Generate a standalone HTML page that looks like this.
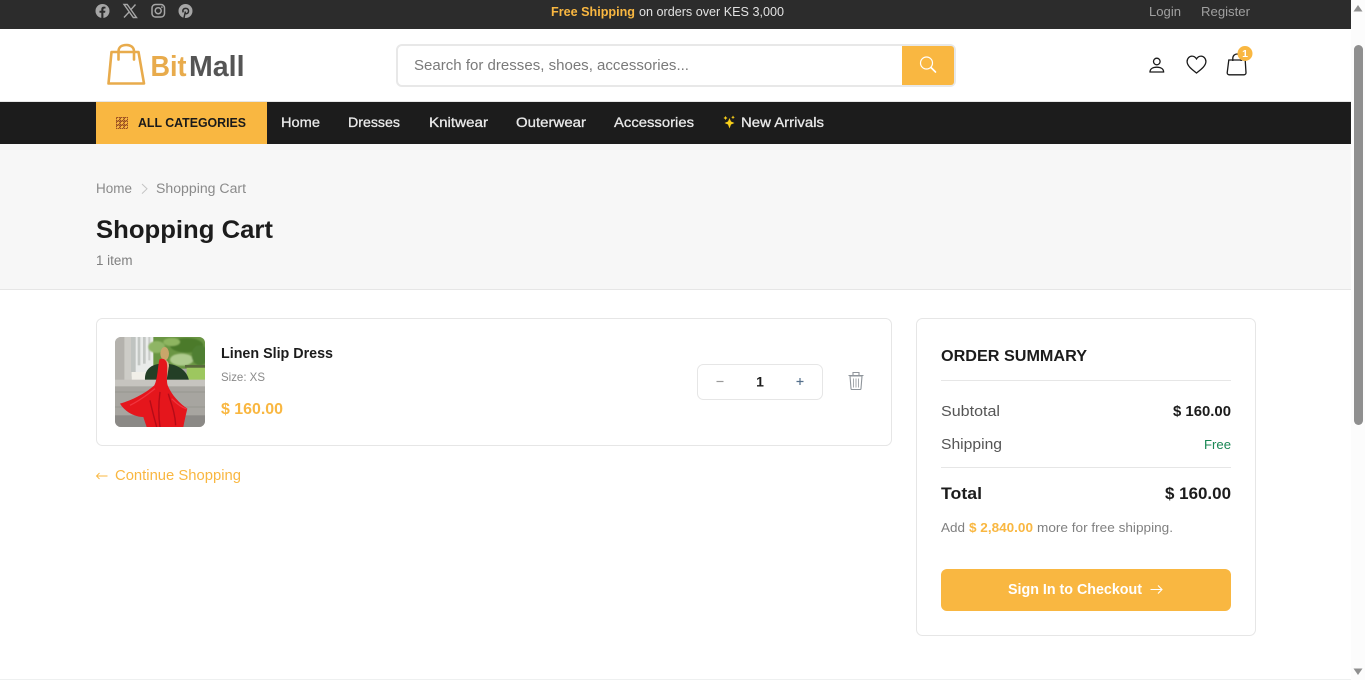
<!DOCTYPE html>
<html lang="en">
<head>
<meta charset="utf-8">
<title>Shopping Cart - BitMall</title>
<style>
html,body{margin:0;padding:0;width:1365px;height:680px;overflow:hidden;background:#fff}
svg{position:absolute;left:0;top:0;display:block}
text{font-family:"Liberation Sans",sans-serif;white-space:pre}
.b{font-weight:700}
</style>
</head>
<body>
<svg width="1365" height="680" viewBox="0 0 1365 680" xmlns="http://www.w3.org/2000/svg">
<defs>
<clipPath id="imgclip"><rect x="0" y="0" width="90" height="90" rx="6"/></clipPath>
<filter id="soft" x="-5%" y="-5%" width="110%" height="110%"><feGaussianBlur stdDeviation="2"/></filter>
<filter id="soft2" x="-5%" y="-5%" width="110%" height="110%"><feGaussianBlur stdDeviation="0.7"/></filter>
</defs>

<!-- backgrounds -->
<rect width="1365" height="680" fill="#fff"/>
<rect width="1351" height="29" fill="#2c2c2c"/>
<rect y="101" width="1351" height="1" fill="#e6e6e6"/>
<rect y="102" width="1351" height="42" fill="#1c1c1c"/>
<rect x="96" y="102" width="171" height="42" fill="#f9b741"/>
<rect y="144" width="1351" height="145" fill="#f7f7f7"/>
<rect y="289" width="1351" height="1" fill="#e6e6e6"/>
<rect y="679" width="1351" height="1" fill="#eef0f0"/>

<!-- scrollbar -->
<rect x="1351" width="14" height="680" fill="#fcfcfc"/>
<path d="M1358 5l4.500 6.500h-9z" fill="#8f8f8f"/>
<rect x="1354" y="45" width="9" height="380" rx="4.500" fill="#8f8f8f"/>
<path d="M1358 675l4.500-6.500h-9z" fill="#8f8f8f"/>

<!-- social -->
<g fill="#a6a6a6">
<circle cx="102.500" cy="11" r="7"/>
<path d="M101.300 18v-5.200h-1.800v-2h1.800V9.300c0-1.800 1-2.700 2.600-2.700l1.600.1v1.800h-1c-.8 0-1.100.5-1.100 1.100v1.200h2l-.3 2h-1.700V18z" fill="#2c2c2c"/>
<circle cx="185.500" cy="11" r="7"/>
<path d="M184 18l1.400-6.500M183.300 12.400c-1.200-2.200.2-4 2.300-4 2.200 0 3.300 1.500 2.900 3.300-.4 1.900-2.500 2.600-3.400 1.300" fill="none" stroke="#2c2c2c" stroke-width="1.500"/>
</g>
<g fill="none" stroke="#a6a6a6">
<path d="M124 4.500h3.200l9.300 13h-3.200zM135.500 4.500l-5.100 5.700M129 12.100l-5 5.400" stroke-width="1.400"/>
<rect x="152" y="4.500" width="12.500" height="12.500" rx="3.500" stroke-width="1.500"/>
<circle cx="158.200" cy="10.700" r="3" stroke-width="1.500"/>
<circle cx="161.900" cy="7.100" r=".5" stroke-width=".8"/>
</g>

<!-- top bar text -->
<text x="551" y="16" font-size="13" class="b" fill="#f9b741" textLength="84" lengthAdjust="spacingAndGlyphs">Free Shipping</text>
<text x="639" y="16" font-size="13" fill="#e2e2e2" textLength="145" lengthAdjust="spacingAndGlyphs">on orders over KES 3,000</text>
<text x="1149" y="16" font-size="13" fill="#a0a0a0" textLength="32" lengthAdjust="spacingAndGlyphs">Login</text>
<text x="1201" y="16" font-size="13" fill="#a0a0a0" textLength="49" lengthAdjust="spacingAndGlyphs">Register</text>

<!-- logo -->
<g fill="none" stroke="#e8ab4c" stroke-width="2.600" stroke-linejoin="round" stroke-linecap="round">
<path d="M111.500 52H138.500L144 83.500H108.500z"/>
<path d="M118.500 59.500v-8c0-4.500 3.500-6.500 7.700-6.500s7.800 2 7.800 6.500v8"/>
</g>
<text x="150.500" y="76" font-size="29" class="b" fill="#e8ab4c" textLength="36" lengthAdjust="spacingAndGlyphs">Bit</text>
<text x="189" y="76" font-size="29" class="b" fill="#555555" textLength="55.500" lengthAdjust="spacingAndGlyphs">Mall</text>

<!-- search -->
<rect x="397" y="45" width="558" height="41" rx="5" fill="#fff" stroke="#e8e8e8" stroke-width="2"/>
<path d="M902 46h49a3 3 0 0 1 3 3v33a3 3 0 0 1-3 3h-49z" fill="#f9b741"/>
<text x="414" y="70" font-size="14.500" fill="#7a7a7a" textLength="275" lengthAdjust="spacingAndGlyphs">Search for dresses, shoes, accessories...</text>
<g fill="none" stroke="#fff" stroke-linecap="round">
<circle cx="926.500" cy="63" r="6" stroke-width="1.200"/>
<path d="M931 67.500l4.500 4.500" stroke-width="1.600"/>
</g>

<!-- header icons -->
<g fill="none" stroke="#1a1a1a" stroke-width="1.300">
<circle cx="1156.800" cy="61.500" r="3.300"/>
<path d="M1150 72c0-3.300 3-4.800 6.800-4.800s6.800 1.500 6.800 4.800z"/>
<path d="M1196.500 73c-4-3.200-9.400-6.900-9.400-11.500 0-3 2.300-5.400 4.800-5.400 2 0 3.500 1 4.600 2.800 1.100-1.800 2.600-2.800 4.600-2.800 2.500 0 4.800 2.400 4.800 5.400 0 4.600-5.400 8.300-9.400 11.500z"/>
<path d="M1228.800 60h16.400l.8 12.800a2 2 0 0 1-2 2h-14.800a2 2 0 0 1-2-2z"/>
<path d="M1232.800 61v-2.500c0-6 8.400-6 8.400 0V61"/>
</g>
<circle cx="1245" cy="53.500" r="7.500" fill="#f9b741"/>
<text x="1245" y="57.200" font-size="10.500" class="b" fill="#fff" text-anchor="middle">1</text>

<!-- nav -->
<g fill="none" stroke="#8a3d1c" stroke-width="1" opacity=".85" stroke-dasharray="1.500 .6">
<rect x="116.500" y="117.500" width="3" height="3"/><rect x="120.500" y="117.500" width="3" height="3"/><rect x="124.500" y="117.500" width="3" height="3"/>
<rect x="116.500" y="121.500" width="3" height="3"/><rect x="120.500" y="121.500" width="3" height="3"/><rect x="124.500" y="121.500" width="3" height="3"/>
<rect x="116.500" y="125.500" width="3" height="3"/><rect x="120.500" y="125.500" width="3" height="3"/><rect x="124.500" y="125.500" width="3" height="3"/>
</g>
<text x="138" y="127" font-size="13" class="b" fill="#1a1a1a" textLength="108" lengthAdjust="spacingAndGlyphs">ALL CATEGORIES</text>
<g font-size="13.500" fill="#e9e9e9" stroke="#e9e9e9" stroke-width=".3">
<text x="281" y="127" textLength="39" lengthAdjust="spacingAndGlyphs">Home</text>
<text x="348" y="127" textLength="52" lengthAdjust="spacingAndGlyphs">Dresses</text>
<text x="429" y="127" textLength="59" lengthAdjust="spacingAndGlyphs">Knitwear</text>
<text x="516" y="127" textLength="70" lengthAdjust="spacingAndGlyphs">Outerwear</text>
<text x="614" y="127" textLength="80" lengthAdjust="spacingAndGlyphs">Accessories</text>
<text x="741" y="127" textLength="83" lengthAdjust="spacingAndGlyphs">New Arrivals</text>
</g>
<g fill="#f8cf1a">
<path d="M729.500 118l1.500 3.500 3.500 1.500-3.500 1.500-1.500 4-1.500-4-3.500-1.500 3.500-1.500z"/>
<path d="M725.500 116l.7 1.300 1.300.7-1.300.7-.7 1.300-.7-1.300-1.300-.7 1.300-.7z"/>
<path d="M733 115.500l.6 1.200 1.200.6-1.200.6-.6 1.200-.6-1.200-1.200-.6 1.200-.6z"/>
</g>

<!-- breadcrumb / title -->
<text x="96" y="193" font-size="13.500" fill="#8a8a8a" textLength="36" lengthAdjust="spacingAndGlyphs">Home</text>
<path d="M142 184l5 4.800-5 4.800" fill="none" stroke="#c4c4c4" stroke-width="1"/>
<text x="156" y="193" font-size="13.500" fill="#8a8a8a" textLength="90" lengthAdjust="spacingAndGlyphs">Shopping Cart</text>
<text x="96" y="238" font-size="25" class="b" fill="#1c1c1c" textLength="177" lengthAdjust="spacingAndGlyphs">Shopping Cart</text>
<text x="96" y="265" font-size="13.500" fill="#7f7f7f" textLength="36.500" lengthAdjust="spacingAndGlyphs">1 item</text>

<!-- cart card -->
<rect x="96.500" y="318.500" width="795" height="127" rx="6" fill="#fff" stroke="#e6e6e6"/>

<!-- product image -->
<g transform="translate(115 337)" clip-path="url(#imgclip)">
<g transform="scale(.33333)">
<rect width="270" height="270" fill="#a9a7a2"/>
<rect x="0" y="0" width="28" height="140" fill="#b4b2ad"/>
<rect x="28" y="0" width="22" height="135" fill="#cdccc7"/>
<rect x="50" y="0" width="90" height="118" fill="#e9ebea"/>
<rect x="48" y="0" width="14" height="105" fill="#bfc3c0"/>
<rect x="68" y="0" width="8" height="85" fill="#c3c7c4"/>
<rect x="84" y="0" width="8" height="80" fill="#c3c7c4"/>
<rect x="100" y="0" width="6" height="70" fill="#c9ccc9"/>
<rect x="50" y="105" width="55" height="25" fill="#f1efe8"/>
<rect x="115" y="0" width="155" height="95" fill="#6a9643"/>
<g filter="url(#soft)">
<ellipse cx="125" cy="30" rx="25" ry="18" fill="#8fb565"/>
<ellipse cx="215" cy="25" rx="50" ry="22" fill="#4c7a2c"/>
<ellipse cx="200" cy="68" rx="35" ry="18" fill="#aecb8d"/>
<ellipse cx="255" cy="55" rx="25" ry="30" fill="#4f7f31"/>
<ellipse cx="170" cy="15" rx="25" ry="12" fill="#8eb560"/>
</g>
<rect x="215" y="92" width="55" height="40" fill="#9dc75f"/>
<rect x="210" y="84" width="60" height="8" fill="#5a6a3c"/>
<path d="M90 130C88 100 105 82 140 80C180 78 215 95 222 130z" fill="#233f26"/>
<rect x="0" y="128" width="270" height="22" fill="#c6c4bf"/>
<rect x="0" y="148" width="270" height="87" fill="#a7a5a0"/>
<path d="M0 165h270M0 210h270" stroke="#93918c" stroke-width="2"/>
<rect x="0" y="235" width="270" height="35" fill="#8b8986"/>
<g filter="url(#soft2)">
<ellipse cx="149" cy="50" rx="13" ry="20" fill="#c9a66b"/>
<path d="M150 68c10 4 14 14 11 24l-10 60h-11l6-50z" fill="#dcae8f"/>
<path d="M133 68C140 62 152 66 155 76C160 95 152 125 158 145C170 175 195 200 217 215C212 235 208 255 205 270L95 270C90 255 88 250 85 240C60 240 30 225 15 200C50 190 90 170 118 145C128 125 128 90 133 68Z" fill="#e5121f"/>
<path d="M105 190c5 25 12 50 20 80M135 165c-4 30-5 70 0 105M160 170c8 30 20 55 22 95" fill="none" stroke="#b30b18" stroke-width="4"/>
<path d="M45 205c25-12 50-30 75-50M170 185c15 15 30 26 45 31" fill="none" stroke="#f0343c" stroke-width="4"/>
</g>
</g>
</g>

<text x="221" y="358" font-size="14.500" class="b" fill="#1c1c1c" textLength="112" lengthAdjust="spacingAndGlyphs">Linen Slip Dress</text>
<text x="221" y="381" font-size="12" fill="#8a8a8a" textLength="44" lengthAdjust="spacingAndGlyphs">Size: XS</text>
<text x="221" y="414" font-size="15.500" class="b" fill="#f9b741" textLength="62" lengthAdjust="spacingAndGlyphs">$ 160.00</text>

<!-- qty -->
<rect x="697.500" y="364.500" width="125" height="35" rx="6" fill="#fff" stroke="#e6e6e6"/>
<path d="M716.500 381.500h7" stroke="#9a9a9a" stroke-width="1.200"/>
<text x="760" y="386.500" font-size="14" class="b" fill="#1c1c1c" text-anchor="middle">1</text>
<path d="M796.500 381.500h7M800 378v7" stroke="#55708c" stroke-width="1.200"/>

<!-- trash -->
<g fill="none" stroke="#8f959b" stroke-width="1.100">
<path d="M848.500 375.500h15M853 375v-2.500h6v2.500"/>
<path d="M850 376l1 12.500a1 1 0 0 0 1 1h8a1 1 0 0 0 1-1l1-12.500z"/>
<path d="M853.500 378.500v9M856 378.500v9M858.500 378.500v9" stroke-width=".8"/>
</g>

<!-- continue -->
<path d="M107.500 476h-11M99.500 473l-3 3 3 3" fill="none" stroke="#f9b741" stroke-width=".9"/>
<text x="115" y="480" font-size="14.500" fill="#f9b741" textLength="126" lengthAdjust="spacingAndGlyphs">Continue Shopping</text>

<!-- summary -->
<rect x="916.500" y="318.500" width="339" height="317" rx="6" fill="#fff" stroke="#e6e6e6"/>
<text x="941" y="361" font-size="16" class="b" fill="#1c1c1c" textLength="146" lengthAdjust="spacingAndGlyphs">ORDER SUMMARY</text>
<rect x="941" y="380" width="290" height="1" fill="#e6e6e6"/>
<text x="941" y="416" font-size="14.500" fill="#555" textLength="59" lengthAdjust="spacingAndGlyphs">Subtotal</text>
<text x="1173" y="416" font-size="14.500" class="b" fill="#1c1c1c" textLength="58" lengthAdjust="spacingAndGlyphs">$ 160.00</text>
<text x="941" y="449" font-size="14.500" fill="#555" textLength="61" lengthAdjust="spacingAndGlyphs">Shipping</text>
<text x="1204" y="449" font-size="13" fill="#198754" textLength="27" lengthAdjust="spacingAndGlyphs">Free</text>
<rect x="941" y="467" width="290" height="1" fill="#e6e6e6"/>
<text x="941" y="499" font-size="16.500" class="b" fill="#1c1c1c" textLength="41" lengthAdjust="spacingAndGlyphs">Total</text>
<text x="1165" y="499" font-size="16.500" class="b" fill="#1c1c1c" textLength="66" lengthAdjust="spacingAndGlyphs">$ 160.00</text>
<text x="941" y="532" font-size="13" fill="#808080" textLength="24" lengthAdjust="spacingAndGlyphs">Add</text>
<text x="969" y="532" font-size="13" class="b" fill="#f9b741" textLength="64" lengthAdjust="spacingAndGlyphs">$ 2,840.00</text>
<text x="1037" y="532" font-size="13" fill="#808080" textLength="136" lengthAdjust="spacingAndGlyphs">more for free shipping.</text>

<rect x="941" y="569" width="290" height="42" rx="6" fill="#f9b741"/>
<text x="1008" y="594" font-size="14.500" class="b" fill="#fff" textLength="134" lengthAdjust="spacingAndGlyphs">Sign In to Checkout</text>
<path d="M1150.500 589.500h11.500M1158 585.500l4 4-4 4" fill="none" stroke="#fff" stroke-width="1.100"/>
</svg>
</body>
</html>
